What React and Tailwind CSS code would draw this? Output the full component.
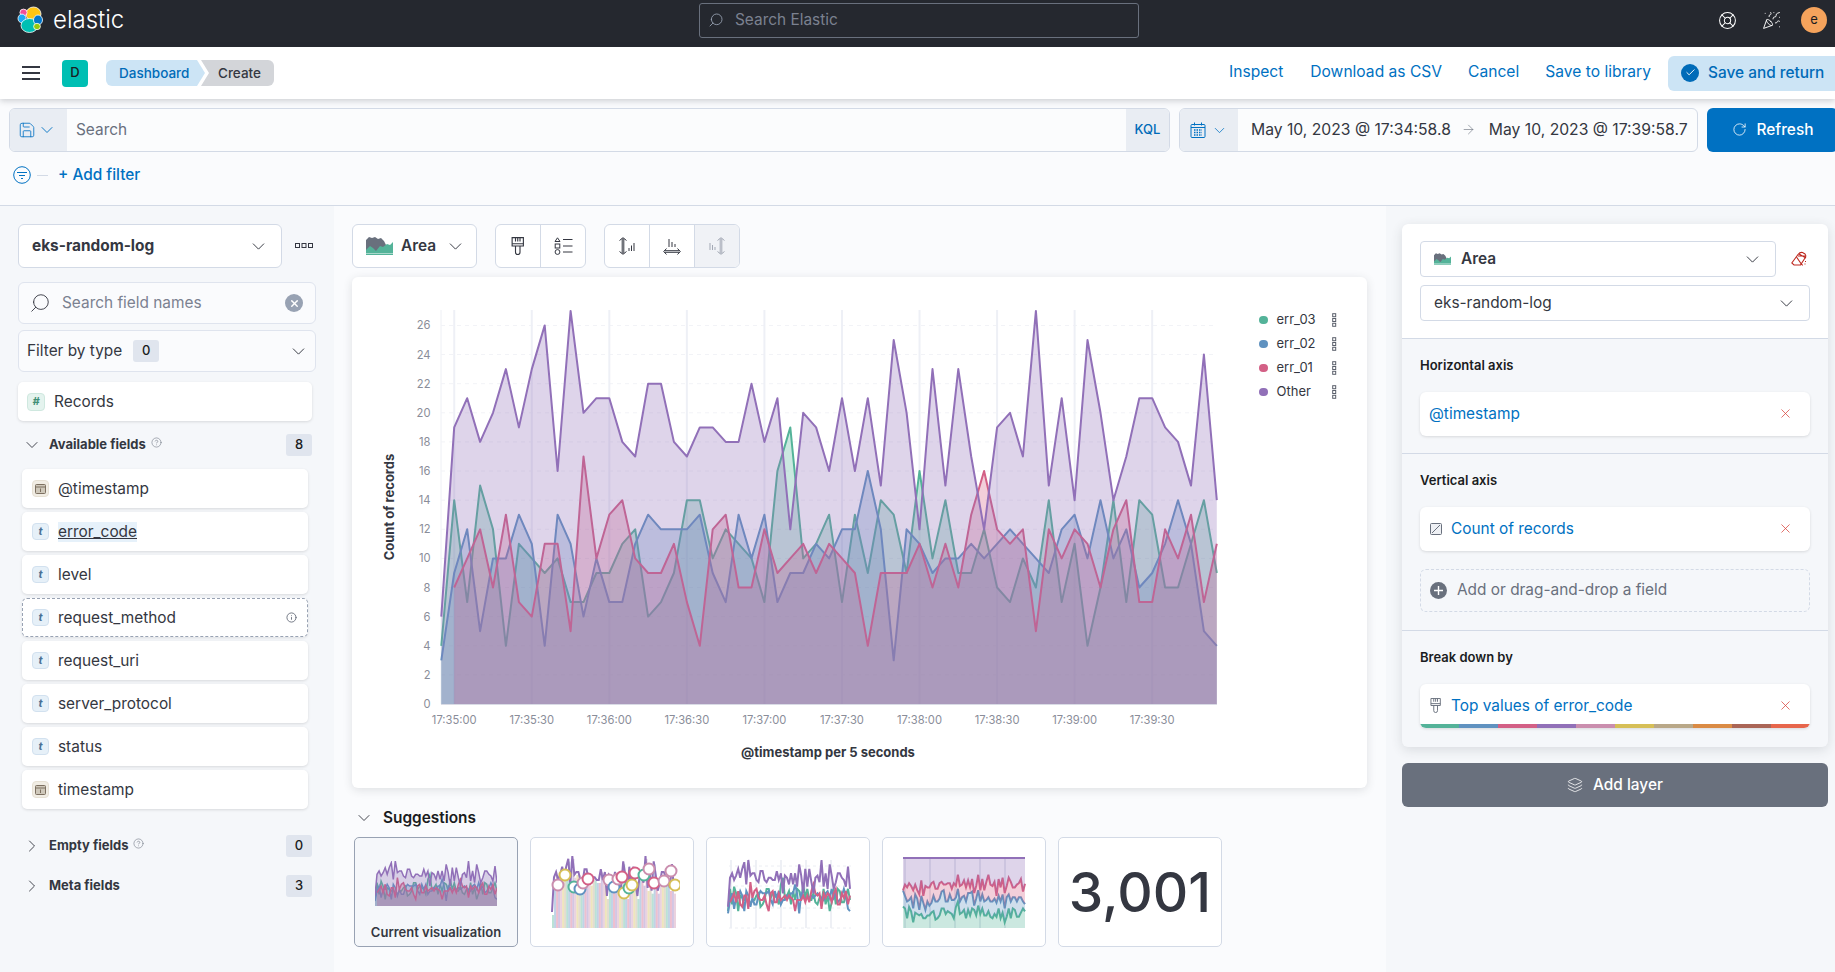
import React from 'react';
import {
  ChevronDown, ChevronRight, Search, X, Save, RotateCw, LifeBuoy, PartyPopper,
  Layers, Info, CircleHelp, ArrowRight, Check,
} from 'lucide-react';

const other = [6,19,21,18,20,23,19,23,26,16,27,20,21,21,18,17,22,22,18,17,19,19,18,18,22,18,21,12,20,19,16,21,16,21,15,25,20,12,23,15,23,17,12,19,20,17,27,15,21,14,25,20,14,17,21,21,19,18,15,24,14];
const err03 = [4,14,7,15,12,4,11,10,9,10,7,7,9,9,11,12,6,7,9,14,14,10,12,11,10,7,16,19,10,11,13,7,13,9,14,13,9,16,10,14,9,9,12,8,7,10,8,14,7,11,4,8,14,7,14,13,8,8,11,14,9];
const err02 = [3,9,12,5,10,10,13,11,4,13,11,6,10,7,7,11,13,12,12,12,13,9,7,13,10,13,7,9,9,11,10,12,12,16,12,3,12,11,9,10,10,11,10,11,12,11,10,9,12,13,10,14,10,12,8,9,11,14,11,5,4];
const err01 = [null,8,10,12,8,13,7,6,11,11,5,17,10,13,14,10,9,9,11,7,4,12,13,8,8,12,9,10,11,9,11,10,9,4,9,9,9,11,8,11,8,13,16,12,11,12,5,12,10,12,11,8,12,14,7,7,12,10,13,7,11];

const series = [
  { name: 'err_03', color: '#54B399', data: err03 },
  { name: 'err_02', color: '#6092C0', data: err02 },
  { name: 'err_01', color: '#D36086', data: err01 },
  { name: 'Other', color: '#9170B8', data: other },
];

const stripColors = ['#54B399', '#6092C0', '#D36086', '#9170B8', '#CA8EAE', '#D6BF57', '#B9A888', '#DA8B45', '#AA6556', '#E7664C'];
const timeLabels = ['17:35:00', '17:35:30', '17:36:00', '17:36:30', '17:37:00', '17:37:30', '17:38:00', '17:38:30', '17:39:00', '17:39:30'];
const yTicks = [0, 2, 4, 6, 8, 10, 12, 14, 16, 18, 20, 22, 24, 26];

const linePoints = (data, sx, sy) =>
  data.map((v, i) => (v === null ? null : `${sx(i).toFixed(1)},${sy(v).toFixed(1)}`)).filter(Boolean).join(' ');

const areaPoints = (data, sx, sy) => {
  const first = data.findIndex(v => v !== null);
  return `${sx(first).toFixed(1)},${sy(0).toFixed(1)} ${linePoints(data, sx, sy)} ${sx(data.length - 1).toFixed(1)},${sy(0).toFixed(1)}`;
};

const MainChart = () => {
  const sx = i => 89.3 + i * 12.925;
  const sy = v => 427 - v * 14.56;
  return (
    <svg width="890" height="511" className="shrink-0" style={{ fontFamily: 'Inter, sans-serif' }}>
      <line x1="89" y1="33" x2="89" y2="427" stroke="#eef0f5" strokeWidth="1" />
      {yTicks.filter(t => t > 0).map(t => (
        <line key={t} x1="89" x2="865" y1={sy(t)} y2={sy(t)} stroke="#f2f3f7" strokeWidth="1" strokeDasharray="4 4" />
      ))}
      {timeLabels.map((_, k) => (
        <line key={k} x1={sx(1 + k * 6)} x2={sx(1 + k * 6)} y1="33" y2="427" stroke="#eef0f6" strokeWidth="2" />
      ))}
      {series.map(s => (
        <g key={s.name}>
          <polygon points={areaPoints(s.data, sx, sy)} fill={s.color} fillOpacity="0.3" />
          <polyline points={linePoints(s.data, sx, sy)} fill="none" stroke={s.color} strokeWidth="2" strokeLinejoin="round" />
        </g>
      ))}
      <line x1="89" y1="427.5" x2="865" y2="427.5" stroke="#d9dbe5" strokeWidth="1" />
      {yTicks.map(t => (
        <text key={t} x="78.5" y={sy(t) + 4} textAnchor="end" fontSize="11.2" fill="#8a8d99">{t}</text>
      ))}
      {timeLabels.map((l, k) => (
        <text key={l} x={sx(1 + k * 6)} y="447" textAnchor="middle" fontSize="11.2" fill="#8a8d99">{l}</text>
      ))}
      <text x="476" y="480" textAnchor="middle" fontSize="13" fontWeight="700" fill="#343741">@timestamp per 5 seconds</text>
      <text x="0" y="0" transform="translate(42 230) rotate(-90)" textAnchor="middle" fontSize="13" fontWeight="700" fill="#343741">Count of records</text>
    </svg>
  );
};

const MiniArea = () => {
  const sx = i => i * (122 / 60);
  const sy = v => 45 - v * (45 / 27);
  return (
    <svg width="122" height="46" className="mt-[23px] mx-auto block">
      {series.map(s => (
        <g key={s.name}>
          <polygon points={areaPoints(s.data, sx, sy)} fill={s.color} fillOpacity="0.3" />
          <polyline points={linePoints(s.data, sx, sy)} fill="none" stroke={s.color} strokeWidth="1.5" />
        </g>
      ))}
    </svg>
  );
};

const bubbles = [
  [4, 29, '#CA8EAE'], [11, 19, '#D6BF57'], [20, 31, '#54B399'], [26, 33, '#6092C0'], [29, 27, '#CA8EAE'],
  [34, 23, '#D36086'], [55, 24, '#CA8EAE'], [60, 31, '#6092C0'], [64, 23, '#CA8EAE'], [68, 21, '#D36086'],
  [70, 37, '#D6BF57'], [75, 32, '#54B399'], [78, 29, '#D6BF57'], [81, 17, '#D36086'], [90, 19, '#54B399'],
  [95, 13, '#CA8EAE'], [100, 27, '#D36086'], [110, 25, '#CA8EAE'], [117, 15, '#CA8EAE'], [121, 29, '#D6BF57'],
];

const MiniBubble = () => {
  const sx = i => 2 + i * (122 / 60);
  const sy = v => 72 - v * (72 / 27);
  return (
    <svg width="130" height="74" className="mt-[18px] ml-[19px] block">
      {other.map((v, i) => (
        <rect key={i} x={sx(i)} y={sy(v) + 3} width="2" height={69 - sy(v)} fill={stripColors[i % 7]} fillOpacity="0.4" />
      ))}
      <polyline points={linePoints(other, sx, sy)} fill="none" stroke="#9170B8" strokeWidth="2" />
      {bubbles.map(([x, y, c], i) => (
        <circle key={i} cx={x + 4} cy={y} r="5.5" fill="#fff" stroke={c} strokeWidth="2" />
      ))}
    </svg>
  );
};

const MiniLines = () => {
  const sx = i => 1 + i * (122 / 60);
  const sy = v => 62 - v * (60 / 27);
  return (
    <svg width="126" height="72" className="mt-[20px] ml-[20px] block">
      {[0, 1, 2, 3, 4].map(k => (
        <line key={k} x1={4 + k * 25} x2={4 + k * 25} y1="2" y2="70" stroke="#eef0f5" strokeWidth="2" />
      ))}
      {[8, 28, 50, 70].map(y => (
        <line key={y} x1="2" x2="124" y1={y} y2={y} stroke="#eceef3" strokeDasharray="3 3" />
      ))}
      {series.map(s => (
        <polyline key={s.name} points={linePoints(s.data, sx, sy)} fill="none" stroke={s.color} strokeWidth="2" />
      ))}
    </svg>
  );
};

const MiniPercent = () => {
  const sx = i => 1 + i * (122 / 60);
  const sy = p => 71 - p * 70;
  const bands = series.map(s => s.data.map(() => 0));
  other.forEach((_, i) => {
    const total = series.reduce((acc, s) => acc + (s.data[i] || 0), 0);
    let run = 0;
    series.forEach((s, k) => {
      run += (s.data[i] || 0) / total;
      bands[k][i] = run;
    });
  });
  return (
    <svg width="125" height="73" className="mt-[19px] ml-[19px] block">
      {[0, 1, 2, 3, 4].map(k => (
        <line key={k} x1={3 + k * 25} x2={3 + k * 25} y1="1" y2="71" stroke="#e6e8ef" strokeWidth="2" />
      ))}
      {series.map((s, k) => {
        const top = bands[k].map((v, i) => `${sx(i).toFixed(1)},${sy(v).toFixed(1)}`);
        const bottom = (k === 0 ? bands[0].map(() => 0) : bands[k - 1]).map((v, i) => `${sx(i).toFixed(1)},${sy(v).toFixed(1)}`).reverse();
        return (
          <g key={s.name}>
            <polygon points={[...top, ...bottom].join(' ')} fill={s.color} fillOpacity="0.3" />
            <polyline points={top.join(' ')} fill="none" stroke={s.color} strokeWidth="2" />
          </g>
        );
      })}
    </svg>
  );
};

const ElasticLogo = () => (
  <svg width="28" height="28" viewBox="0 0 28 28" className="shrink-0">
    <ellipse cx="16.5" cy="8" rx="7.5" ry="7" fill="#FEC514" stroke="#fff" strokeWidth="0.8" />
    <ellipse cx="6.5" cy="6.5" rx="3.6" ry="3.4" fill="#F04E98" stroke="#fff" strokeWidth="0.8" />
    <ellipse cx="5" cy="12.5" rx="4" ry="4.4" fill="#1BA9F5" stroke="#fff" strokeWidth="0.8" />
    <ellipse cx="12.5" cy="19.5" rx="8.5" ry="7" fill="#00BFB3" stroke="#fff" strokeWidth="0.8" />
    <ellipse cx="21" cy="14" rx="4.5" ry="5" fill="#0077CC" stroke="#fff" strokeWidth="0.8" />
    <ellipse cx="20" cy="20.5" rx="3.4" ry="3.2" fill="#93C90E" stroke="#fff" strokeWidth="0.8" />
  </svg>
);

const AreaIcon = ({ w = 27, h = 18 }) => (
  <svg width={w} height={h} viewBox="0 0 27 18" className="shrink-0">
    <path d="M0 3 L3 0 L6 1 L9 0 L12 2 L15 1 L18 4 L20 8 L20 14 L0 14 Z" fill="#69707D" />
    <path d="M0 13 L4 9 L7 11 L10 14 L14 9 L17 10 L21 7 L24 8 L27 5 L27 16 L0 16 Z" fill="#54B399" />
    <rect x="0" y="16.5" width="27" height="1.5" fill="#54B399" />
  </svg>
);

const BrushIcon = ({ color = '#343741', size = 18 }) => (
  <svg width={size * 0.75} height={size} viewBox="0 0 12 16" fill="none" stroke={color} strokeWidth="1" className="shrink-0">
    <path d="M1 .5h10v7.5H1z" />
    <path d="M4 .5V4M6 .5V4M8 .5V4" />
    <path d="M1 6h10" />
    <path d="M4 8v5.5a2 2 0 0 0 4 0V8" />
  </svg>
);

const LegendIcon = () => (
  <svg width="19" height="18" viewBox="0 0 19 18" fill="none" stroke="#343741" strokeWidth="1" className="shrink-0">
    <path d="M3.5 .8 L6 4.5 H1 Z" />
    <rect x="1.2" y="7" width="4.6" height="4" />
    <circle cx="3.5" cy="15" r="2.4" />
    <path d="M9 2.5h9.5M9 9h9.5M9 15h9.5" strokeWidth="1.2" />
  </svg>
);

const AxisLeftIcon = ({ color = '#343741' }) => (
  <svg width="16" height="18" viewBox="0 0 16 18" fill="none" stroke={color} strokeWidth="1" className="shrink-0">
    <path d="M.5 3.5 L4 .7 L7.5 3.5 M.5 14.5 L4 17.3 L7.5 14.5 M3.2 1.5 v15 M4.8 1.5 v15" />
    <path d="M10 14 v-3 M12.5 14 V8.5 M15 14 V6" />
  </svg>
);

const AxisRightIcon = ({ color = '#343741' }) => (
  <svg width="16" height="18" viewBox="0 0 16 18" fill="none" stroke={color} strokeWidth="1" className="shrink-0">
    <path d="M8.5 3.5 L12 .7 L15.5 3.5 M8.5 14.5 L12 17.3 L15.5 14.5 M11.2 1.5 v15 M12.8 1.5 v15" />
    <path d="M1 13 V6 M3.5 13 V8 M6 13 v-3" />
  </svg>
);

const AxisBottomIcon = () => (
  <svg width="18" height="17" viewBox="0 0 18 17" fill="none" stroke="#343741" strokeWidth="1" className="shrink-0">
    <path d="M6 9 V1 M9 9 V4 M12 9 V6" />
    <path d="M3.5 10.5 L.7 13.5 L3.5 16.5 M14.5 10.5 L17.3 13.5 L14.5 16.5 M1.5 12.7 h15 M1.5 14.3 h15" />
  </svg>
);

const EraserIcon = () => (
  <svg width="16" height="16" viewBox="0 0 16 16" fill="none" stroke="#BD271E" strokeWidth="1.1" className="shrink-0">
    <path d="M.8 12 L7 3.5 Q9 1 11.5 1.5 L14 3 Q15.5 5 14 7 L9.5 14 H3 Z" />
    <path d="M5.5 6 L11 14 M8 3 L15 7 M7 5 h7" />
    <path d="M11 14 h1 M13.5 13 h1 M14 10.5 h1" />
  </svg>
);

const DotsH = () => (
  <svg width="18" height="6" viewBox="0 0 18 6" fill="none" stroke="#343741" strokeWidth="1" className="shrink-0">
    <rect x=".5" y=".5" width="4" height="4" /><rect x="7" y=".5" width="4" height="4" /><rect x="13.5" y=".5" width="4" height="4" />
  </svg>
);

const DotsV = () => (
  <svg width="5" height="14" viewBox="0 0 5 14" fill="none" stroke="#5a5f6b" strokeWidth="1" className="shrink-0">
    <rect x=".7" y=".7" width="3" height="3" /><rect x=".7" y="5.5" width="3" height="3" /><rect x=".7" y="10.3" width="3" height="3" />
  </svg>
);

const FilterCircle = () => (
  <svg width="18" height="18" viewBox="0 0 18 18" fill="none" stroke="#0071c2" strokeWidth="1" className="shrink-0">
    <circle cx="9" cy="9" r="8.3" />
    <path d="M4 6.5h10M6 9.5h6M8 12.5h2" />
  </svg>
);

const CalendarIcon = () => (
  <svg width="16" height="16" viewBox="0 0 16 16" fill="none" stroke="#0071c2" strokeWidth="1" className="shrink-0">
    <rect x="1" y="2.5" width="14" height="13" rx="1" />
    <path d="M1 5.5h14M4.5 .5v3M11.5 .5v3" />
    <path d="M4 8h8M4 10.5h8M4 13h8" strokeWidth="1.4" strokeDasharray="1.5 1" />
  </svg>
);

const CountIcon = () => (
  <svg width="12" height="12" viewBox="0 0 12 12" fill="none" stroke="#69707d" strokeWidth="1" className="shrink-0">
    <rect x=".5" y=".5" width="11" height="11" rx="1" fill="#eef0f4" />
    <path d="M10 2 L2 10" />
  </svg>
);

const PlusCircle = () => (
  <svg width="17" height="17" viewBox="0 0 17 17" className="shrink-0">
    <circle cx="8.5" cy="8.5" r="8.5" fill="#69707d" />
    <path d="M8.5 4v9M4 8.5h9" stroke="#fff" strokeWidth="1.4" />
  </svg>
);

const Token = ({ type }) => {
  if (type === 'number') {
    return <span className="w-[18px] h-[18px] shrink-0 rounded-[4px] bg-[#e4f3ee] border border-[#cfe8df] flex items-center justify-center text-[11px] italic font-bold text-[#3f8f76]">#</span>;
  }
  if (type === 'date') {
    return (
      <span className="w-[17px] h-[17px] shrink-0 rounded-[4px] bg-[#f1ede4] border border-[#e6e0d3] flex items-center justify-center">
        <svg width="11" height="11" viewBox="0 0 11 11" fill="#cfc8ba" stroke="#7d7060" strokeWidth="1">
          <rect x=".5" y="1.5" width="10" height="9" rx="1" />
          <path d="M.5 4h10M5.5 5.5v3.5" fill="none" />
        </svg>
      </span>
    );
  }
  return <span className="w-[17px] h-[17px] shrink-0 rounded-[4px] bg-[#e6f0f8] border border-[#d2e1ef] flex items-center justify-center text-[11px] italic font-bold text-[#4a7194]">t</span>;
};

const Badge = ({ children }) => (
  <span className="w-[26px] h-[22px] rounded-[3px] bg-[#e0e5ee] flex items-center justify-center text-[13px] font-medium text-[#1a1c21]">{children}</span>
);

const fields = [
  { name: '@timestamp', type: 'date' },
  { name: 'error_code', type: 'text', active: true },
  { name: 'level', type: 'text' },
  { name: 'request_method', type: 'text', dashed: true },
  { name: 'request_uri', type: 'text' },
  { name: 'server_protocol', type: 'text' },
  { name: 'status', type: 'text' },
  { name: 'timestamp', type: 'date' },
];

const FieldRow = ({ field }) => (
  <div className={field.dashed
    ? 'h-[39px] bg-white rounded-[5px] border border-dashed border-[#98a2b3] flex items-center pl-[9px] pr-[10px] shadow-[0_1px_3px_rgba(0,0,0,0.1)]'
    : 'h-[39px] bg-white rounded-[5px] flex items-center pl-[10px] pr-[11px] shadow-[0_1px_3px_rgba(0,0,0,0.12)]'}>
    <Token type={field.type} />
    <span className={field.active
      ? 'ml-[9px] text-[15.4px] leading-[20px] text-[#343741] underline bg-[#e6f1fa]'
      : 'ml-[9px] text-[15.4px] leading-[20px] text-[#343741]'}>{field.name}</span>
    {field.dashed && <Info size={11} className="ml-auto text-[#69707d]" />}
  </div>
);

const Sidebar = () => (
  <aside className="w-[334px] shrink-0 bg-[#f5f7fa] pl-[18px] pt-[18px]">
    <div className="flex items-center">
      <div className="w-[264px] h-[44px] bg-white border border-[#d3dae6] rounded-[6px] flex items-center justify-between pl-[13px] pr-[12px]">
        <span className="pb-[1px] text-[15.4px] font-bold text-[#343741]">eks-random-log</span>
        <ChevronDown size={21} strokeWidth={1.1} className="text-[#343741]" />
      </div>
      <div className="ml-[13px]"><DotsH /></div>
    </div>
    <div className="mt-[14px] w-[298px] h-[42px] bg-[#fafbfd] border border-[#dfe4ee] rounded-[6px] flex items-center pl-[10px] pr-[12px]">
      <Search size={22} strokeWidth={1} className="text-[#343741] -scale-x-100" />
      <span className="ml-[11px] pb-[1px] text-[15.4px] text-[#7b8190]">Search field names</span>
      <span className="ml-auto w-[18px] h-[18px] rounded-full bg-[#98a2b3] flex items-center justify-center">
        <X size={11} strokeWidth={3} className="text-white" />
      </span>
    </div>
    <div className="mt-[6px] w-[298px] h-[42px] bg-[#fafbfd] border border-[#dfe4ee] rounded-[6px] flex items-center pl-[8px] pr-[6px]">
      <span className="text-[15.4px] text-[#343741]">Filter by type</span>
      <span className="ml-[11px]"><Badge>0</Badge></span>
      <ChevronDown size={21} strokeWidth={1.1} className="ml-auto text-[#343741]" />
    </div>
    <div className="mt-[10px] w-[294px] h-[39px] bg-white rounded-[5px] flex items-center pl-[9px] shadow-[0_1px_3px_rgba(0,0,0,0.12)]">
      <Token type="number" />
      <span className="ml-[9px] text-[15.4px] text-[#343741]">Records</span>
    </div>
    <div className="mt-[13px] w-[294px] h-[22px] flex items-center pl-[4px]">
      <ChevronDown size={20} strokeWidth={1.1} className="text-[#343741]" />
      <span className="ml-[7px] text-[13px] font-bold text-[#343741]">Available fields</span>
      <CircleHelp size={11} strokeWidth={1.2} className="ml-[5px] -mt-[5px] text-[#69707d]" />
      <span className="ml-auto"><Badge>8</Badge></span>
    </div>
    <div className="mt-[13px] ml-[4px] w-[286px] flex flex-col gap-[4px]">
      {fields.map(f => <FieldRow key={f.name} field={f} />)}
    </div>
    <div className="mt-[26px] w-[294px] h-[22px] flex items-center pl-[4px]">
      <ChevronRight size={20} strokeWidth={1.1} className="text-[#343741]" />
      <span className="ml-[7px] text-[13px] font-bold text-[#343741]">Empty fields</span>
      <CircleHelp size={11} strokeWidth={1.2} className="ml-[5px] -mt-[5px] text-[#69707d]" />
      <span className="ml-auto"><Badge>0</Badge></span>
    </div>
    <div className="mt-[18px] w-[294px] h-[22px] flex items-center pl-[4px]">
      <ChevronRight size={20} strokeWidth={1.1} className="text-[#343741]" />
      <span className="ml-[7px] text-[13px] font-bold text-[#343741]">Meta fields</span>
      <span className="ml-auto"><Badge>3</Badge></span>
    </div>
  </aside>
);

const Toolbar = () => (
  <div className="flex h-[44px]">
    <div className="w-[125px] bg-white border border-[#d3dae6] rounded-[6px] flex items-center pl-[13px]">
      <AreaIcon />
      <span className="ml-[8px] pb-[1px] text-[15.4px] font-semibold text-[#343741]">Area</span>
      <ChevronDown size={21} strokeWidth={1.1} className="ml-[9px] text-[#343741]" />
    </div>
    <div className="ml-[18px] w-[91px] bg-white border border-[#d3dae6] rounded-[6px] flex overflow-hidden">
      <div className="w-[45px] border-r border-[#d3dae6] flex items-center justify-center"><BrushIcon /></div>
      <div className="flex-1 flex items-center justify-center"><LegendIcon /></div>
    </div>
    <div className="ml-[18px] w-[136px] bg-white border border-[#d3dae6] rounded-[6px] flex overflow-hidden">
      <div className="w-[45px] border-r border-[#d3dae6] flex items-center justify-center"><AxisLeftIcon /></div>
      <div className="w-[45px] border-r border-[#d3dae6] flex items-center justify-center"><AxisBottomIcon /></div>
      <div className="flex-1 bg-[#f0f2f6] flex items-center justify-center"><AxisRightIcon color="#a3a9b5" /></div>
    </div>
  </div>
);

const Legend = () => (
  <div className="pt-[31px] pl-[17px] flex-1 flex flex-col">
    {series.map(s => (
      <div key={s.name} className="h-[24px] flex items-center">
        <span className="w-[8.5px] h-[8.5px] rounded-full" style={{ backgroundColor: s.color }} />
        <span className="ml-[9px] text-[13px] text-[#343741]">{s.name}</span>
        <span className="ml-auto mr-[30px]"><DotsV /></span>
      </div>
    ))}
  </div>
);

const SuggestionCard = ({ active, children }) => (
  <div className={active
    ? 'w-[164px] h-[110px] rounded-[5px] border border-[#98a2b3] bg-[#f5f7fa] relative'
    : 'w-[164px] h-[110px] rounded-[5px] border border-[#d3dae6] bg-white relative'}>
    {children}
  </div>
);

const Center = () => (
  <main className="w-[1052px] shrink-0 bg-[#fafbfd] pl-[18px] pt-[18px]">
    <Toolbar />
    <div className="mt-[9px] w-[1015px] h-[511px] bg-white rounded-[6px] shadow-[0_2px_10px_rgba(52,55,65,0.14)] flex">
      <MainChart />
      <Legend />
    </div>
    <div className="mt-[21px] h-[18px] flex items-center pl-[2px]">
      <ChevronDown size={20} strokeWidth={1.1} className="text-[#343741]" />
      <span className="ml-[9px] text-[15.4px] font-semibold text-[#1a1c21]">Suggestions</span>
    </div>
    <div className="mt-[10px] ml-[2px] flex gap-[12px]">
      <SuggestionCard active>
        <MiniArea />
        <div className="absolute left-0 right-0 bottom-[4px] text-center text-[13px] font-semibold text-[#343741]">Current visualization</div>
      </SuggestionCard>
      <SuggestionCard><MiniBubble /></SuggestionCard>
      <SuggestionCard><MiniLines /></SuggestionCard>
      <SuggestionCard><MiniPercent /></SuggestionCard>
      <SuggestionCard>
        <div className="h-full flex items-center justify-center text-[55px] font-medium text-[#343741] leading-none">3,001</div>
      </SuggestionCard>
    </div>
  </main>
);

const DimensionRow = ({ icon, label, children }) => (
  <div className="relative h-[44px] bg-white rounded-[6px] shadow-[0_1px_3px_rgba(0,0,0,0.12)] flex items-center pl-[9px] pb-[1px] overflow-hidden">
    {icon && <span className="w-[22px] flex justify-start pl-[1px]">{icon}</span>}
    <span className="text-[15.4px] text-[#0071c2]">{label}</span>
    <X size={15} strokeWidth={1.2} className="absolute right-[17px] top-[14px] text-[#d9423a]" />
    {children}
  </div>
);

const RightPanel = () => (
  <aside className="w-[449px] shrink-0 bg-[#f5f7fa] pl-[16px] pt-[18px]">
    <div className="w-[426px] rounded-[6px] bg-[#f5f7fa] shadow-[0_3px_12px_rgba(52,55,65,0.14)] overflow-hidden">
      <div className="bg-white px-[18px] pt-[17px] pb-[17px] border-b border-[#d3dae6] rounded-t-[6px]">
        <div className="flex items-center">
          <div className="w-[356px] h-[36px] border border-[#d3dae6] rounded-[4px] flex items-center pl-[13px] pr-[12px]">
            <AreaIcon w={17} h={12} />
            <span className="ml-[10px] pb-[1px] text-[15.4px] font-semibold text-[#343741]">Area</span>
            <ChevronDown size={21} strokeWidth={1.1} className="ml-auto text-[#343741]" />
          </div>
          <span className="ml-[15px]"><EraserIcon /></span>
        </div>
        <div className="mt-[8px] h-[36px] border border-[#d3dae6] rounded-[4px] flex items-center pl-[13px] pr-[12px] text-[15.4px] text-[#343741]">
          <span className="pb-[1px]">eks-random-log</span>
          <ChevronDown size={21} strokeWidth={1.1} className="ml-auto text-[#343741]" />
        </div>
      </div>
      <div className="px-[18px] pt-[18px] pb-[17px] border-b border-[#d3dae6]">
        <div className="h-[17px] mb-[18px] text-[13px] leading-[17px] font-semibold text-[#1a1c21]">Horizontal axis</div>
        <DimensionRow label="@timestamp" />
      </div>
      <div className="px-[18px] pt-[18px] pb-[18px] border-b border-[#d3dae6]">
        <div className="h-[17px] mb-[18px] text-[13px] leading-[17px] font-semibold text-[#1a1c21]">Vertical axis</div>
        <DimensionRow icon={<CountIcon />} label="Count of records" />
        <div className="mt-[18px] h-[43px] rounded-[6px] border border-dashed border-[#d3dae6] flex items-center pl-[9px]">
          <PlusCircle />
          <span className="ml-[10px] pb-[1px] text-[15.4px] text-[#69707d]">Add or drag-and-drop a field</span>
        </div>
      </div>
      <div className="px-[18px] pt-[18px] pb-[19px]">
        <div className="h-[17px] mb-[18px] text-[13px] leading-[17px] font-semibold text-[#1a1c21]">Break down by</div>
        <DimensionRow icon={<BrushIcon color="#69707d" size={15} />} label="Top values of error_code">
          <div className="absolute left-0 right-0 bottom-0 h-[4px] flex">
            {stripColors.map(c => <span key={c} className="flex-1" style={{ backgroundColor: c }} />)}
          </div>
        </DimensionRow>
      </div>
    </div>
    <div className="mt-[16px] w-[426px] h-[44px] pb-[1px] rounded-[6px] bg-[#69707d] flex items-center justify-center text-white">
      <Layers size={16} strokeWidth={1.2} />
      <span className="ml-[10px] text-[15.4px] font-medium">Add layer</span>
    </div>
  </aside>
);

const App = () => {
  return (
    <div className="w-[1835px] h-[972px] overflow-hidden bg-[#fafbfd] font-['Inter',sans-serif] text-[#343741]">
      <header className="h-[47px] pb-[7px] bg-[#25282f] flex items-center">
        <div className="flex-1 flex items-center pl-[17px]">
          <ElasticLogo />
          <span className="ml-[8px] text-[24px] font-light text-white leading-none">elastic</span>
        </div>
        <div className="w-[440px] mr-[6px] h-[35px] border border-[#69707d] rounded-[3px] bg-[#25282f] flex items-center pl-[8px]">
          <Search size={16} strokeWidth={1.3} className="text-[#98a2b3] -scale-x-100" />
          <span className="ml-[11px] pb-[1px] text-[15.4px] text-[#7b8190]">Search Elastic</span>
        </div>
        <div className="flex-1 flex items-center justify-end pr-[8px]">
          <LifeBuoy size={19} strokeWidth={1.3} className="text-white" />
          <PartyPopper size={19} strokeWidth={1.2} className="ml-[25px] text-white" />
          <span className="ml-[20px] w-[26px] h-[26px] rounded-full bg-[#f5a35c] flex items-center justify-center text-[13px] text-[#1a1c21]">e</span>
        </div>
      </header>

      <nav className="relative z-10 h-[52px] bg-white shadow-[0_2px_6px_rgba(52,55,65,0.22)] flex items-center">
        <div className="ml-[22px] w-[18px] flex flex-col gap-[4px]">
          <span className="h-[2px] bg-[#343741]" />
          <span className="h-[2px] bg-[#343741]" />
          <span className="h-[2px] bg-[#343741]" />
        </div>
        <span className="ml-[22px] w-[26px] h-[27px] rounded-[4px] bg-[#00bfb3] flex items-center justify-center text-[13px] font-medium text-[#1a1c21]">D</span>
        <div className="ml-[18px] flex h-[26px] text-[13.5px] font-medium">
          <span className="w-[99px] bg-[#cce4f5] rounded-l-[6px] pl-[13px] flex items-center text-[#006bb8] [clip-path:polygon(0_0,91px_0,100%_50%,91px_100%,0_100%)]">Dashboard</span>
          <span className="w-[73px] -ml-[4px] bg-[#d3d5d9] rounded-r-[6px] pl-[17px] flex items-center text-[#343741] [clip-path:polygon(0_0,100%_0,100%_100%,0_100%,8px_50%)]">Create</span>
        </div>
        <div className="ml-auto flex items-center text-[15.6px] text-[#0071c2]">
          <span className="pb-[2px]">Inspect</span>
          <span className="ml-[27px] pb-[2px]">Download as CSV</span>
          <span className="ml-[26px] pb-[2px]">Cancel</span>
          <span className="ml-[26px] pb-[2px]">Save to library</span>
          <span className="ml-[17px] w-[170px] -mr-[3px] h-[35px] pb-[1px] rounded-l-[6px] bg-[#cce4f5] flex items-center pl-[13px] text-[15.4px] text-[#006bb8] font-medium">
            <span className="w-[18px] h-[18px] rounded-full bg-[#006bb8] flex items-center justify-center">
              <Check size={11} strokeWidth={2} className="text-white" />
            </span>
            <span className="ml-[9px]">Save and return</span>
          </span>
        </div>
      </nav>

      <section className="h-[107px] bg-[#fafbfd] border-b border-[#d3dae6] pt-[9px]">
        <div className="flex h-[44px] pl-[9px]">
          <div className="w-[1161px] shrink-0 border border-[#d3dae6] rounded-[6px] flex overflow-hidden bg-[#fbfcfd]">
            <div className="w-[57px] bg-[#e9edf3] flex items-center pl-[8px]">
              <Save size={18} strokeWidth={1.1} className="text-[#0071c2]" />
              <ChevronDown size={20} strokeWidth={1.1} className="ml-[1px] text-[#0071c2]" />
            </div>
            <span className="ml-[9px] pb-[1px] self-center text-[15.4px] text-[#69707d]">Search</span>
            <div className="ml-auto w-[43px] bg-[#e9edf3] flex items-center justify-center text-[13px] font-medium text-[#006bb8]">KQL</div>
          </div>
          <div className="ml-[9px] w-[519px] shrink-0 border border-[#d3dae6] rounded-[6px] flex overflow-hidden bg-[#fbfcfd]">
            <div className="w-[58px] bg-[#e9edf3] flex items-center pl-[10px]">
              <CalendarIcon />
              <ChevronDown size={17} strokeWidth={1.1} className="ml-[5px] text-[#0071c2]" />
            </div>
            <div className="flex-1 flex items-center pl-[13px] pb-[1px] text-[15.7px] text-[#343741] whitespace-nowrap">
              <span>May 10, 2023 @ 17:34:58.8</span>
              <ArrowRight size={15} strokeWidth={1} className="ml-[10px] shrink-0 text-[#69707d]" />
              <span className="ml-[13px]">May 10, 2023 @ 17:39:58.7</span>
            </div>
          </div>
          <div className="ml-[9px] w-[131px] shrink-0 bg-[#0071c2] rounded-[6px] flex items-center justify-center pb-[1px] text-white text-[15.4px] font-medium">
            <RotateCw size={15} strokeWidth={1.3} />
            <span className="ml-[10px]">Refresh</span>
          </div>
        </div>
        <div className="mt-[14px] flex items-center h-[18px] pl-[13px]">
          <FilterCircle />
          <span className="ml-[6px] w-[11px] h-px bg-[#d3dae6]" />
          <span className="ml-[10px] text-[15.4px] font-medium text-[#0071c2]">+ Add filter</span>
        </div>
      </section>

      <div className="flex h-[766px]">
        <Sidebar />
        <Center />
        <RightPanel />
      </div>
    </div>
  );
};

export default App;
